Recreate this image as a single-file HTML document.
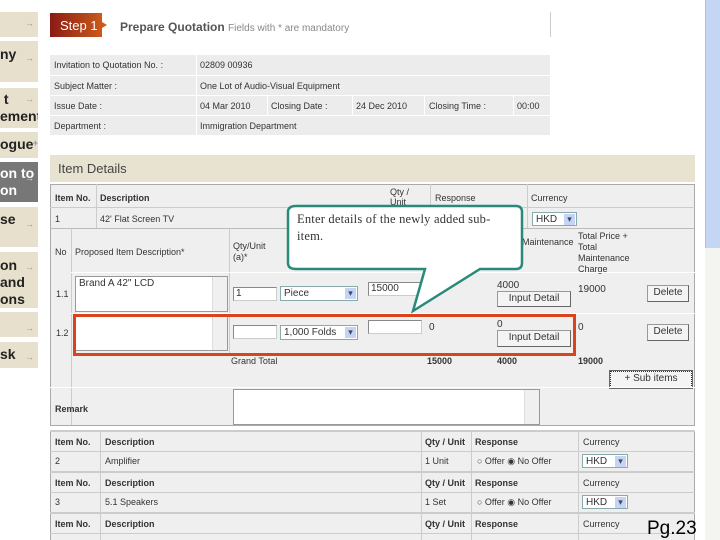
<!DOCTYPE html><html><head><style>
*{margin:0;padding:0;box-sizing:border-box}
body{width:720px;height:540px;overflow:hidden;background:#fff;position:relative;font-family:"Liberation Sans",sans-serif;font-size:9px;color:#333}
.a{position:absolute}
.sb{position:absolute;left:0;width:38px;background:#e6e0cc;font-weight:bold;font-size:14px;color:#222;line-height:17px;overflow:hidden;white-space:nowrap}
.sb i{position:absolute;right:4px;font-style:normal;font-size:9px;color:#999;top:3px}
.t{position:absolute;white-space:nowrap}
.in{position:absolute;background:#fff;border:1px solid #888;border-right-color:#ccc;border-bottom-color:#ccc}
.sel{position:absolute;background:#fff;border:1px solid #8aa;font-size:10px;padding-left:3px;line-height:13px}
.sel:after{content:"▾";position:absolute;right:1px;top:1px;width:11px;height:11px;background:#c4d4f4;color:#446;font-size:9px;line-height:11px;text-align:center}
.btn{position:absolute;background:#f4f4f4;border:1px solid #999;border-right-color:#666;border-bottom-color:#666;text-align:center;font-size:10px;line-height:14px}
.ln{position:absolute;background:#fff}
.ta{position:absolute;background:#fff;border:1px solid #999}
.ta:after{content:"";position:absolute;right:0;top:0;width:14px;height:100%;background:#f0f0f0;border-left:1px solid #ddd}
</style></head><body>
<div class="sb" style="top:12px;height:25px"><i>→</i></div>
<div class="sb" style="top:41px;height:41px;padding-top:5px">ny<i style="top:9px">→</i></div>
<div class="sb" style="top:88px;height:40px;padding-top:3px">&nbsp;t<br>ement<i>→</i></div>
<div class="sb" style="top:132px;height:26px;padding-top:4px">ogue<i style="right:0">+</i></div>
<div class="sb" style="top:162px;height:40px;background:#777;color:#fff;padding-top:3px">on to<br>on<i style="color:#ddd;top:8px">→</i></div>
<div class="sb" style="top:207px;height:40px;padding-top:4px">se<i style="top:9px">→</i></div>
<div class="sb" style="top:252px;height:56px;padding-top:5px">on<br>and<br>ons<i style="top:7px">→</i></div>
<div class="sb" style="top:312px;height:25px"><i style="top:8px">→</i></div>
<div class="sb" style="top:342px;height:26px;padding-top:4px">sk<i style="top:7px">→</i></div>

<svg class="a" style="left:50px;top:13px" width="58" height="24"><defs><linearGradient id="g"><stop offset="0" stop-color="#8a1a14"/><stop offset="1" stop-color="#d0601c"/></linearGradient></defs><path d="M0 0H52V9L57 12L52 15V24H0Z" fill="url(#g)"/></svg>
<div class="t" style="left:60px;top:18px;font-size:13px;color:#fff">Step 1</div>
<div class="t" style="left:120px;top:20px;font-size:12px;font-weight:bold;color:#555">Prepare Quotation <span style="font-weight:normal;font-size:10px;color:#888">Fields with * are mandatory</span></div>
<div class="a" style="left:550px;top:12px;width:1px;height:25px;background:#ccc"></div>

<div class="a" style="left:50px;top:55px;width:500px;height:80px;background:#ececec"></div>
<div class="ln" style="left:50px;top:75px;width:500px;height:1px"></div>
<div class="ln" style="left:50px;top:95px;width:500px;height:1px"></div>
<div class="ln" style="left:50px;top:115px;width:500px;height:1px"></div>
<div class="ln" style="left:196px;top:55px;width:1px;height:80px"></div>
<div class="ln" style="left:267px;top:95px;width:1px;height:20px"></div>
<div class="ln" style="left:352px;top:95px;width:1px;height:20px"></div>
<div class="ln" style="left:424px;top:95px;width:1px;height:20px"></div>
<div class="ln" style="left:513px;top:95px;width:1px;height:20px"></div>
<div class="t" style="left:54px;top:60px">Invitation to Quotation No. :</div>
<div class="t" style="left:200px;top:60px">02809 00936</div>
<div class="t" style="left:54px;top:81px">Subject Matter :</div>
<div class="t" style="left:200px;top:81px">One Lot of Audio-Visual Equipment</div>
<div class="t" style="left:54px;top:101px">Issue Date :</div>
<div class="t" style="left:200px;top:101px">04 Mar 2010</div>
<div class="t" style="left:271px;top:101px">Closing Date :</div>
<div class="t" style="left:356px;top:101px">24 Dec 2010</div>
<div class="t" style="left:429px;top:101px">Closing Time :</div>
<div class="t" style="left:517px;top:101px">00:00</div>
<div class="t" style="left:54px;top:121px">Department :</div>
<div class="t" style="left:200px;top:121px">Immigration Department</div>

<div class="a" style="left:50px;top:155px;width:645px;height:27px;background:#e8e3d0;font-size:13px;line-height:27px;padding-left:8px;color:#444">Item Details</div>
<div class="a" style="left:50px;top:184px;width:645px;height:242px;background:#efefef;border:1px solid #aaa"></div>
<div class="a" style="left:50px;top:184px;width:645px;height:24px;border-bottom:1px solid #ccc"></div>
<div class="a" style="left:50px;top:228px;width:645px;height:1px;background:#bbb"></div>
<div class="a" style="left:96px;top:184px;width:1px;height:44px;background:#ccc"></div>
<div class="a" style="left:430px;top:184px;width:1px;height:24px;background:#ccc"></div>
<div class="a" style="left:527px;top:184px;width:1px;height:44px;background:#ccc"></div>
<div class="a" style="left:71px;top:229px;width:1px;height:196px;background:#ccc"></div>
<div class="a" style="left:229px;top:229px;width:1px;height:125px;background:#ccc"></div>
<div class="t" style="left:55px;top:193px;font-weight:bold">Item No.</div>
<div class="t" style="left:100px;top:193px;font-weight:bold">Description</div>
<div class="t" style="left:390px;top:187px;line-height:10px">Qty /<br>Unit</div>
<div class="t" style="left:435px;top:193px">Response</div>
<div class="t" style="left:531px;top:193px">Currency</div>
<div class="t" style="left:55px;top:214px">1</div>
<div class="t" style="left:100px;top:214px">42' Flat Screen TV</div>
<div class="sel" style="left:532px;top:212px;width:45px;height:14px">HKD</div>

<div class="t" style="left:55px;top:247px">No</div>
<div class="t" style="left:75px;top:247px">Proposed Item Description*</div>
<div class="t" style="left:233px;top:241px;line-height:11px">Qty/Unit<br>(a)*</div>
<div class="t" style="left:522px;top:237px;line-height:11px">Maintenance</div>
<div class="t" style="left:578px;top:231px;line-height:11px">Total Price +<br>Total<br>Maintenance<br>Charge</div>
<div class="a" style="left:71px;top:272px;width:624px;height:1px;background:#fff"></div>
<div class="a" style="left:71px;top:313px;width:624px;height:1px;background:#fff"></div>

<div class="t" style="left:56px;top:289px">1.1</div>
<div class="ta" style="left:75px;top:276px;width:153px;height:36px;font-size:10px;padding:1px 3px">Brand A 42" LCD</div>
<div class="in" style="left:233px;top:287px;width:44px;height:14px;font-size:10px;padding-left:2px;line-height:12px">1</div>
<div class="sel" style="left:280px;top:286px;width:78px;height:15px">Piece</div>
<div class="in" style="left:368px;top:282px;width:62px;height:14px;font-size:10px;padding-left:2px;line-height:12px">15000</div>
<div class="t" style="left:497px;top:280px;font-size:10px">4000</div>
<div class="btn" style="left:497px;top:291px;width:74px;height:16px">Input Detail</div>
<div class="t" style="left:578px;top:284px;font-size:10px">19000</div>
<div class="btn" style="left:647px;top:285px;width:42px;height:17px">Delete</div>

<div class="t" style="left:56px;top:328px">1.2</div>
<div class="ta" style="left:75px;top:316px;width:153px;height:35px"></div>
<div class="in" style="left:233px;top:325px;width:44px;height:14px"></div>
<div class="sel" style="left:280px;top:325px;width:78px;height:15px">1,000 Folds</div>
<div class="in" style="left:368px;top:320px;width:54px;height:14px"></div>
<div class="t" style="left:429px;top:322px;font-size:10px">0</div>
<div class="t" style="left:497px;top:319px;font-size:10px">0</div>
<div class="btn" style="left:497px;top:330px;width:74px;height:17px">Input Detail</div>
<div class="t" style="left:578px;top:322px;font-size:10px">0</div>
<div class="btn" style="left:647px;top:324px;width:42px;height:17px">Delete</div>
<div class="a" style="left:73px;top:314px;width:503px;height:42px;border:3px solid #d9441c"></div>

<div class="t" style="left:231px;top:356px">Grand Total</div>
<div class="t" style="left:427px;top:356px;font-weight:bold">15000</div>
<div class="t" style="left:497px;top:356px;font-weight:bold">4000</div>
<div class="t" style="left:578px;top:356px;font-weight:bold">19000</div>
<div class="btn" style="left:610px;top:371px;width:82px;height:17px;border:1px dotted #333;outline:1px solid #666">+ Sub items</div>
<div class="a" style="left:50px;top:387px;width:645px;height:1px;background:#fff"></div>
<div class="t" style="left:55px;top:404px;font-weight:bold">Remark</div>
<div class="ta" style="left:233px;top:389px;width:307px;height:36px"></div>

<div class="a" style="left:50px;top:430px;width:645px;height:110px;background:#efefef;border-left:1px solid #aaa;border-right:1px solid #aaa"></div>
<div class="a" style="left:50px;top:430px;width:645px;height:2px;background:#ccc"></div>
<div class="a" style="left:50px;top:451px;width:645px;height:1px;background:#ccc"></div>
<div class="a" style="left:50px;top:471px;width:645px;height:2px;background:#ccc"></div>
<div class="a" style="left:50px;top:492px;width:645px;height:1px;background:#ccc"></div>
<div class="a" style="left:50px;top:512px;width:645px;height:2px;background:#ccc"></div>
<div class="a" style="left:50px;top:533px;width:645px;height:1px;background:#ccc"></div>
<div class="a" style="left:100px;top:430px;width:1px;height:110px;background:#ccc"></div>
<div class="a" style="left:421px;top:430px;width:1px;height:110px;background:#ccc"></div>
<div class="a" style="left:471px;top:430px;width:1px;height:110px;background:#ccc"></div>
<div class="a" style="left:578px;top:430px;width:1px;height:110px;background:#ccc"></div>

<div class="t" style="left:55px;top:437px;font-weight:bold">Item No.</div><div class="t" style="left:105px;top:437px;font-weight:bold">Description</div><div class="t" style="left:425px;top:437px;font-weight:bold">Qty / Unit</div><div class="t" style="left:475px;top:437px;font-weight:bold">Response</div><div class="t" style="left:583px;top:437px">Currency</div>
<div class="t" style="left:55px;top:456px">2</div><div class="t" style="left:105px;top:456px">Amplifier</div><div class="t" style="left:425px;top:456px">1 Unit</div><div class="t" style="left:477px;top:456px">○ Offer ◉ No Offer</div><div class="sel" style="left:582px;top:454px;width:46px;height:14px">HKD</div>
<div class="t" style="left:55px;top:478px;font-weight:bold">Item No.</div><div class="t" style="left:105px;top:478px;font-weight:bold">Description</div><div class="t" style="left:425px;top:478px;font-weight:bold">Qty / Unit</div><div class="t" style="left:475px;top:478px;font-weight:bold">Response</div><div class="t" style="left:583px;top:478px">Currency</div>
<div class="t" style="left:55px;top:497px">3</div><div class="t" style="left:105px;top:497px">5.1 Speakers</div><div class="t" style="left:425px;top:497px">1 Set</div><div class="t" style="left:477px;top:497px">○ Offer ◉ No Offer</div><div class="sel" style="left:582px;top:495px;width:46px;height:14px">HKD</div>
<div class="t" style="left:55px;top:519px;font-weight:bold">Item No.</div><div class="t" style="left:105px;top:519px;font-weight:bold">Description</div><div class="t" style="left:425px;top:519px;font-weight:bold">Qty / Unit</div><div class="t" style="left:475px;top:519px;font-weight:bold">Response</div><div class="t" style="left:583px;top:519px">Currency</div>
<div class="t" style="left:647px;top:518px;font-size:19px;color:#000">Pg.23</div>

<div class="a" style="left:705px;top:0;width:15px;height:248px;background:#c4d6f4;border-left:1px solid #a8c0e8"></div>
<div class="a" style="left:705px;top:248px;width:15px;height:292px;background:#f4f4f0"></div>

<svg class="a" style="left:280px;top:200px" width="250" height="120"><path d="M16 6 H236 Q242 6 242 12 V63 Q242 69 236 69 H200 L133 111 L145 69 H16 Q8 69 8 63 V12 Q8 6 16 6 Z" fill="#fff" stroke="#2a8a7a" stroke-width="2.5"/></svg>
<div class="t" style="left:297px;top:211px;font-family:'Liberation Serif',serif;font-size:12.5px;letter-spacing:0.2px;color:#333;line-height:17px;white-space:normal;width:218px">Enter details of the newly added sub-item.</div>
</body></html>
